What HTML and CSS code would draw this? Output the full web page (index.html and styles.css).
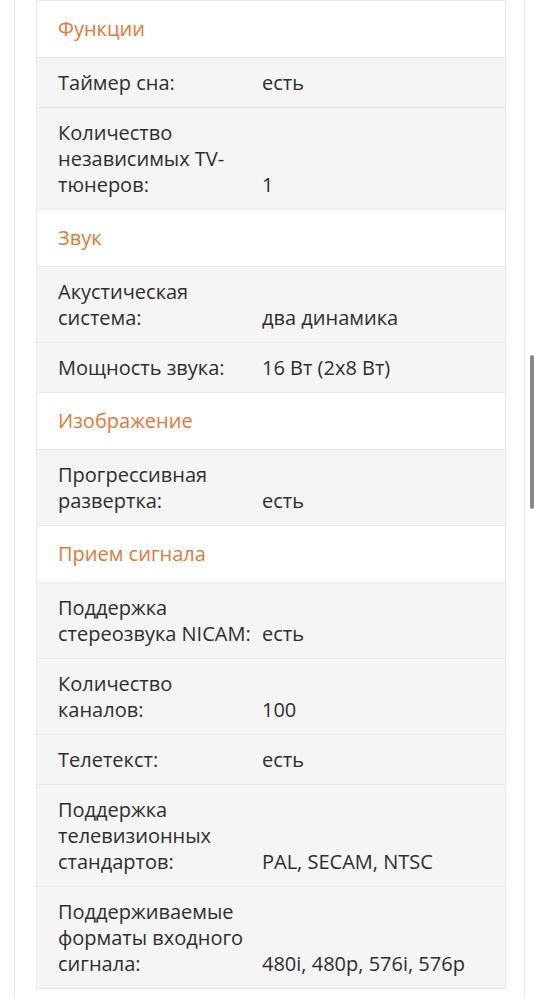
FILE: index.html
```html
<!DOCTYPE html>
<html lang="ru">
<head>
    <meta charset="UTF-8">
    <meta name="viewport" content="width=device-width, initial-scale=1.0">
    <title>Характеристики</title>
    <link rel="stylesheet" href="styles.css">
</head>
<body>

    <div class="page">
        <div class="specs">
            <div class="group">Функции</div>
            <div class="row"><span class="name">Таймер сна:</span><span class="value">есть</span></div>
            <div class="row"><span class="name">Количество независимых TV-тюнеров:</span><span class="value">1</span></div>

            <div class="group">Звук</div>
            <div class="row"><span class="name">Акустическая система:</span><span class="value">два динамика</span></div>
            <div class="row"><span class="name">Мощность звука:</span><span class="value">16 Вт (2x8 Вт)</span></div>

            <div class="group">Изображение</div>
            <div class="row"><span class="name">Прогрессивная развертка:</span><span class="value">есть</span></div>

            <div class="group">Прием сигнала</div>
            <div class="row"><span class="name">Поддержка стереозвука NICAM:</span><span class="value">есть</span></div>
            <div class="row"><span class="name">Количество каналов:</span><span class="value">100</span></div>
            <div class="row"><span class="name">Телетекст:</span><span class="value">есть</span></div>
            <div class="row"><span class="name">Поддержка телевизионных стандартов:</span><span class="value">PAL, SECAM, NTSC</span></div>
            <div class="row"><span class="name">Поддерживаемые форматы входного сигнала:</span><span class="value">480i, 480p, 576i, 576p</span></div>
        </div>
    </div>

    <div class="scrollbar"></div>

</body>
</html>
```

FILE: styles.css
```css
body {
    margin: 0;
    font-family: "Open Sans", "Noto Sans", sans-serif;
    font-size: 20px;
    line-height: 26px;
    color: #2e2e2e;
    background: #ffffff;
}
.page {
    box-sizing: border-box;
    width: 511px;
    min-height: 100vh;
    margin-left: 14px;
    padding: 0 18px 0 21px;
    border-left: 1px solid #e6e6e6;
    border-right: 1px solid #e6e6e6;
}
.specs {
    margin-top: -1px;
    border: 1px solid #e8e8e8;
}
.group {
    padding: 15px 21px;
    color: #df7a3c;
    background: #ffffff;
    border-top: 1px solid #e8e8e8;
}
.row {
    display: grid;
    grid-template-columns: 196px 1fr;
    column-gap: 8px;
    align-items: end;
    padding: 12px 21px 11px;
    background: #f5f5f5;
    border-top: 1px solid #e8e8e8;
}
.scrollbar {
    position: absolute;
    top: 355px;
    right: 4px;
    width: 4px;
    height: 154px;
    border-radius: 2px;
    background: #8a8a8a;
}
```
